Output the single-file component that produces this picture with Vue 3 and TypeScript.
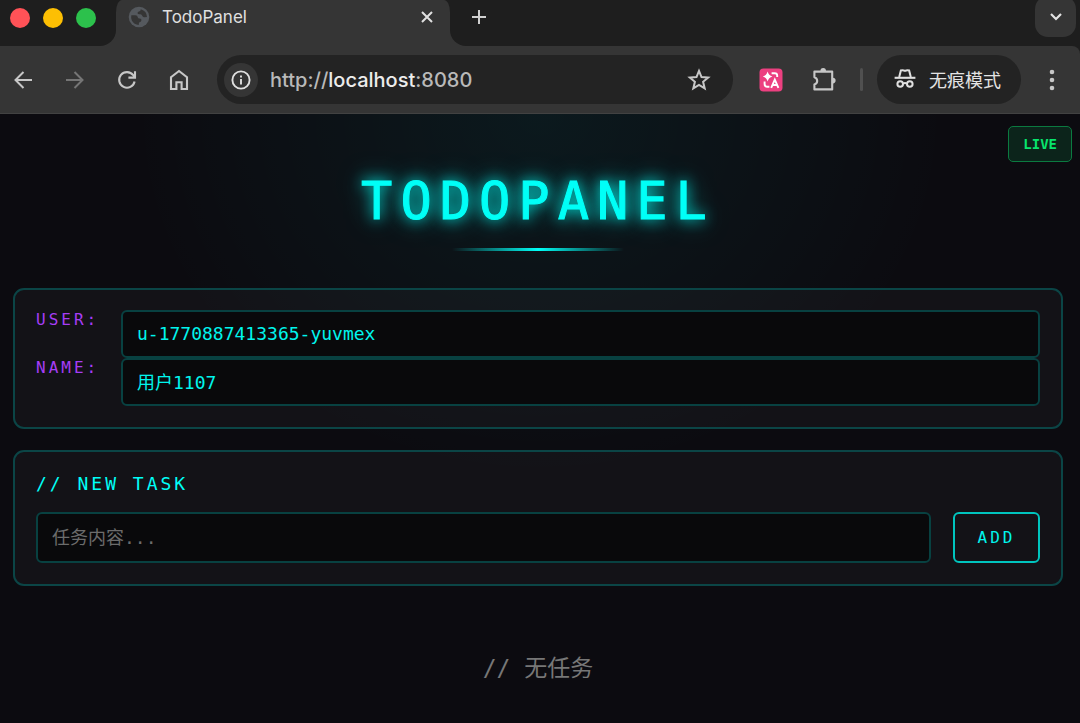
<script setup lang="ts">
import { ref } from 'vue'

interface Field {
  id: string
  label: string
  value: string
}

const url = ref<string>('http://localhost:8080')
const fields = ref<Field[]>([
  { id: 'user', label: 'USER:', value: 'u-1770887413365-yuvmex' },
  { id: 'name', label: 'NAME:', value: '用户1107' },
])
const draft = ref<string>('')
</script>

<template>
  <div class="window">
    <header class="browser">
      <div class="strip">
        <div class="lights">
          <button class="light red" aria-label="Close window"></button>
          <button class="light yellow" aria-label="Minimize window"></button>
          <button class="light green" aria-label="Zoom window"></button>
        </div>
        <div class="tab">
          <svg class="globe" width="22" height="22" viewBox="0 0 22 22" aria-hidden="true">
            <circle cx="11" cy="11" r="10.3" fill="#55595e" />
            <path d="M3.3 9.2H7.4Q9.6 9.4 9.8 11.2Q10 12.6 11.8 12.4Q13.8 12.4 13.4 14.4Q13 16 11.4 16.2Q10.6 17.4 10.8 19Q6 18.8 3.8 14.6Q2.8 12 3.3 9.2Z" fill="#353535" />
            <path d="M12.8 3.2Q12.6 5.4 10.8 5.6Q9.2 6 9.6 7.6Q10.2 8.6 12 8.2Q13.8 8 14.2 9.8Q14.8 11.6 16.6 11.2L19 11Q18.8 5 12.8 3.2Z" fill="#353535" />
          </svg>
          <span class="tab-title">TodoPanel</span>
          <button class="plain small" aria-label="Close tab">
            <svg width="14" height="14" viewBox="0 0 14 14"><path d="M2 2L12 12M12 2L2 12" stroke="#e0e0e0" stroke-width="2" /></svg>
          </button>
        </div>
        <div class="strip-rest">
          <button class="plain small" aria-label="New tab">
            <svg width="16" height="16" viewBox="0 0 16 16"><path d="M8 1V15M1 8H15" stroke="#d0d0d0" stroke-width="2" /></svg>
          </button>
          <button class="tab-search" aria-label="Search tabs">
            <svg width="14" height="10" viewBox="0 0 14 10"><path d="M2 2L7 7L12 2" fill="none" stroke="#e3e3e3" stroke-width="2.2" /></svg>
          </button>
        </div>
      </div>

      <div class="toolbar">
        <nav class="nav">
          <button class="plain" aria-label="Back">
            <svg width="20" height="20" viewBox="0 0 20 20"><path d="M19 10H2.5M10.5 2L2.5 10L10.5 18" fill="none" stroke="#c7c7c7" stroke-width="2" /></svg>
          </button>
          <button class="plain" aria-label="Forward">
            <svg width="20" height="20" viewBox="0 0 20 20"><path d="M1 10H17.5M9.5 2L17.5 10L9.5 18" fill="none" stroke="#757575" stroke-width="2" /></svg>
          </button>
          <button class="plain" aria-label="Reload">
            <svg width="20" height="20" viewBox="0 0 20 20"><path d="M17.6 11.5A7.8 7.8 0 1 1 16.2 5.2L17.8 7M18 1.2V7.6H11.4" fill="none" stroke="#c7c7c7" stroke-width="2.1" /></svg>
          </button>
          <button class="plain" aria-label="Home">
            <svg width="20" height="22" viewBox="0 0 20 22"><path d="M2 20V8.2L10 2L18 8.2V20H12.6V13.2H7.4V20Z" fill="none" stroke="#c7c7c7" stroke-width="2.1" /></svg>
          </button>
        </nav>

        <div class="omnibox">
          <button class="site-info" aria-label="View site information">
            <svg width="20" height="20" viewBox="0 0 20 20"><circle cx="10" cy="10" r="8.6" fill="none" stroke="#e0e0e0" stroke-width="1.9" /><path d="M10 9V14.4M10 5.6V7.6" stroke="#e0e0e0" stroke-width="1.9" /></svg>
          </button>
          <a class="url" :href="url">http://<span>localhost</span>:8080</a>
          <button class="plain" aria-label="Bookmark this tab">
            <svg width="24" height="24" viewBox="0 0 24 24"><path d="M12 2.8L14.5 9L21.2 9.5L16.1 13.8L17.7 20.4L12 16.9L6.3 20.4L7.9 13.8L2.8 9.5L9.5 9Z" fill="none" stroke="#c7c7c7" stroke-width="2" /></svg>
          </button>
        </div>

        <div class="extensions">
          <button class="plain" aria-label="Translate">
            <svg width="24" height="24" viewBox="0 0 24 24">
              <rect x="0.5" y="0.5" width="23" height="23" rx="4" fill="#ec4080" />
              <path d="M8.6 3.6Q9.6 7.6 13.4 8.6Q9.6 9.6 8.6 13.6Q7.6 9.6 3.8 8.6Q7.6 7.6 8.6 3.6Z" fill="#fff" />
              <path d="M12.6 5.2H15.6Q18.2 5.2 18.2 7.6V9M5.6 13.6V16Q5.6 18.8 8.4 18.8H10.4M12.2 19.8L15.8 11.6L19.4 19.8M13.4 17H18.2" fill="none" stroke="#fff" stroke-width="1.9" />
            </svg>
          </button>
          <button class="plain" aria-label="Extensions">
            <svg width="26" height="26" viewBox="0 0 26 26">
              <path d="M3.4 4.6H21.2V22.4H3.4V17.6Q6.2 16.6 6.2 14Q6.2 11.2 3.4 10.2Z" fill="none" stroke="#c7c7c7" stroke-width="2.1" stroke-linejoin="round" />
              <path d="M9.4 4A2.8 3 0 0 1 15 4ZM21.8 10.8A2.8 2.8 0 0 1 21.8 16.4Z" fill="#c7c7c7" />
            </svg>
          </button>
        </div>
        <span class="divider"></span>
        <button class="incognito">
          <svg width="22" height="22" viewBox="0 0 22 22" aria-hidden="true">
            <path d="M5.2 9L6.9 2.4Q9 1.8 11 2.8Q13 1.8 15.1 2.4L16.8 9" fill="none" stroke="#e0e0e0" stroke-width="2" />
            <path d="M0.6 9.8H21.4" stroke="#e0e0e0" stroke-width="2.1" />
            <circle cx="6.2" cy="16" r="2.8" fill="none" stroke="#e0e0e0" stroke-width="2" />
            <circle cx="15.8" cy="16" r="2.8" fill="none" stroke="#e0e0e0" stroke-width="2" />
            <path d="M9 15.6Q11 14.4 13 15.6" fill="none" stroke="#e0e0e0" stroke-width="2" />
          </svg>
          <span>无痕模式</span>
        </button>
        <button class="plain" aria-label="Menu">
          <svg width="6" height="22" viewBox="0 0 6 22" fill="#c7c7c7"><circle cx="3" cy="3" r="2.3" /><circle cx="3" cy="11" r="2.3" /><circle cx="3" cy="19" r="2.3" /></svg>
        </button>
      </div>
    </header>

    <main class="page">
      <span class="live">LIVE</span>
      <h1 class="title">TODOPANEL</h1>
      <div class="underline"></div>

      <section class="card">
        <div v-for="field in fields" :key="field.id" class="row">
          <label :for="field.id">{{ field.label }}</label>
          <input :id="field.id" v-model="field.value" class="box" type="text" />
        </div>
      </section>

      <section class="card">
        <h2>// NEW TASK</h2>
        <form class="new-task" @submit.prevent>
          <input v-model="draft" class="box" type="text" placeholder="任务内容..." aria-label="任务内容" />
          <button class="add" type="submit">ADD</button>
        </form>
      </section>

      <p class="empty">// 无任务</p>
    </main>
  </div>
</template>

<style>
body {
  margin: 0;
  background: #0c0b10;
}
</style>

<style scoped>
* {
  box-sizing: border-box;
}

.window {
  display: flex;
  flex-direction: column;
  min-height: 100vh;
  overflow: hidden;
  font-family: Inter, "Noto Sans CJK SC", sans-serif;
}

button {
  padding: 0;
  border: 0;
  background: none;
  font: inherit;
}

svg {
  display: block;
}

.browser {
  background: #1e1e1e;
}

.strip {
  display: flex;
  height: 46px;
  background: linear-gradient(#1e1e1e 50%, #353535 50%);
}

.lights {
  display: flex;
  gap: 13px;
  width: 116px;
  padding: 8px 10px;
  border-bottom-right-radius: 16px;
  background: #1e1e1e;
}

.light {
  width: 20px;
  height: 20px;
  border-radius: 50%;
}

.red {
  background: #ff5257;
}

.yellow {
  background: #fdbf03;
}

.green {
  background: #2cc14c;
}

.tab {
  display: flex;
  align-items: flex-start;
  width: 334px;
  padding: 6px 12px;
  border-radius: 6px 6px 0 0 / 12px 12px 0 0;
  background: #353535;
}

.tab-title {
  flex: 1;
  margin-left: 12px;
  color: #e0e0e0;
  font-size: 17px;
  line-height: 22px;
}

.plain {
  display: flex;
  align-items: center;
  justify-content: center;
  width: 36px;
  height: 36px;
}

.small {
  width: 22px;
  height: 22px;
}

.strip-rest {
  display: flex;
  flex: 1;
  align-items: flex-start;
  justify-content: space-between;
  padding: 6px 4px 0 18px;
  border-bottom-left-radius: 16px;
  background: #1e1e1e;
}

.tab-search {
  display: flex;
  align-items: center;
  justify-content: center;
  width: 41px;
  height: 41px;
  margin-top: -10px;
  border-radius: 13px;
  background: #353535;
}

.toolbar {
  display: flex;
  align-items: center;
  height: 68px;
  padding: 0 10px 0 5px;
  border-bottom: 1px solid #424242;
  border-top-right-radius: 8px;
  background: #353535;
}

.nav {
  display: flex;
  gap: 16px;
}

.omnibox {
  display: flex;
  flex: 1;
  align-items: center;
  height: 49px;
  margin: 0 20px;
  padding: 0 16px 0 7px;
  border-radius: 25px;
  background: #232323;
}

.site-info {
  display: flex;
  align-items: center;
  justify-content: center;
  width: 34px;
  height: 34px;
  border-radius: 50%;
  background: #353535;
}

.url {
  flex: 1;
  margin-left: 12px;
  color: #b9b9b9;
  font-size: 20px;
  font-weight: 500;
  text-decoration: none;
}

.url span {
  color: #ececec;
}

.extensions {
  display: flex;
  gap: 17px;
}

.divider {
  width: 3px;
  height: 23px;
  margin: 0 14px 0 18px;
  border-radius: 2px;
  background: #505050;
}

.incognito {
  display: flex;
  gap: 13px;
  align-items: center;
  width: 144px;
  height: 49px;
  margin-right: 13px;
  padding: 0 0 2px 17px;
  border-radius: 25px;
  background: #232323;
  color: #e3e3e3;
  font-size: 18px;
  font-weight: 400;
}

.page {
  position: relative;
  flex: 1;
  padding: 57px 17px 20px 13px;
  background: radial-gradient(ellipse 38% 60% at 50% 0, rgba(0, 255, 247, 0.06), rgba(0, 255, 247, 0)) #0c0b10;
  font-family: "DejaVu Sans Mono", "Noto Sans CJK SC", monospace;
}

.live {
  position: absolute;
  top: 12px;
  right: 8px;
  padding: 0 14px;
  border: 1px solid #0b7a40;
  border-radius: 5px;
  background: #0c241b;
  color: #07e56d;
  font-size: 14px;
  font-weight: 700;
  line-height: 34px;
}

.title {
  margin: 0;
  color: #00fff7;
  font-size: 52px;
  font-weight: 400;
  line-height: 60px;
  letter-spacing: 8px;
  text-align: center;
  text-shadow: 0 0 14px #00fff7, 0 0 26px rgba(0, 255, 247, 0.6);
  -webkit-text-stroke: 1px #00fff7;
}

.underline {
  width: 172px;
  height: 3px;
  margin: 17px auto 37px;
  background: linear-gradient(90deg, transparent, #00fff7, transparent);
}

.card {
  margin-bottom: 21px;
  padding: 20px 21px 21px;
  border: 2px solid #0b4546;
  border-radius: 11px;
  background: rgba(255, 255, 255, 0.03);
}

.row {
  display: grid;
  grid-template-columns: 63px 1fr;
  gap: 22px;
}

.row label {
  color: #a63df5;
  font-size: 16px;
  line-height: 20px;
  letter-spacing: 3px;
}

.box {
  width: 100%;
  height: 48px;
  padding: 0 14px 2px;
  border: 2px solid #084141;
  border-radius: 6px;
  outline: none;
  background: #09090b;
  color: #00f5ed;
  font: inherit;
  font-size: 18px;
}

.box::placeholder {
  color: #6c6c6c;
  opacity: 1;
}

.card h2 {
  margin: 0 0 16px;
  color: #00fff7;
  font-size: 18px;
  font-weight: 400;
  line-height: 24px;
  letter-spacing: 3px;
}

.new-task {
  display: flex;
  gap: 22px;
}

.new-task .box {
  flex: 1;
  height: 51px;
  padding-bottom: 0;
}

.add {
  width: 87px;
  border: 2px solid #00c4be;
  border-radius: 6px;
  color: #00f5ed;
  font-size: 16px;
  letter-spacing: 3px;
}

.empty {
  margin: 66px 0 0;
  color: #777;
  font-size: 23px;
  line-height: 32px;
  text-align: center;
}
</style>
